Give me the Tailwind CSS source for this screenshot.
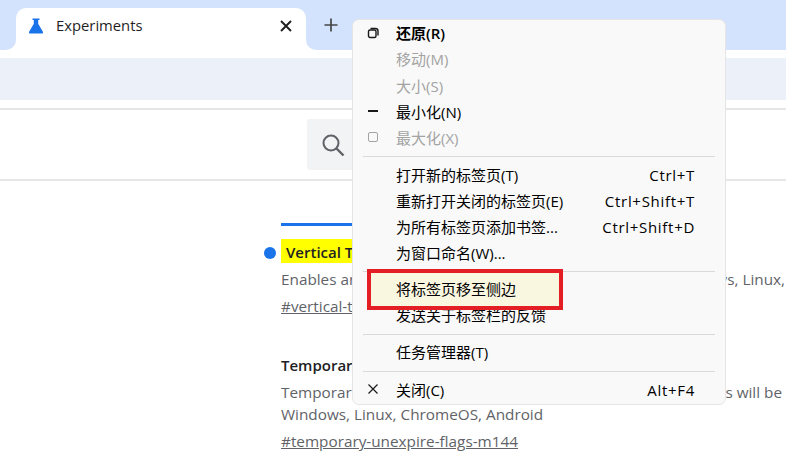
<!DOCTYPE html>
<html lang="zh-CN">
<head>
  <meta charset="UTF-8" />
  <meta name="viewport" content="width=device-width, initial-scale=1.0" />
  <title>Experiments</title>
  <script src="https://cdn.jsdelivr.net/npm/@tailwindcss/browser@4"></script>
</head>
<body class="bg-white">
<div class="relative w-[786px] h-[452px] overflow-hidden bg-white font-['Open_Sans','Noto_Sans_CJK_SC',sans-serif]">

  <!-- tab strip -->
  <div class="h-[50px] bg-[#d3e3fd] flex items-end pl-[16px]">
    <div class="relative w-[290px] h-[42px] bg-white rounded-t-[10px] flex items-center pl-[11px] pr-[14px]">
      <div class="absolute left-[-10px] bottom-0 w-[10px] h-[10px] bg-white"><div class="w-full h-full bg-[#d3e3fd] rounded-br-[10px]"></div></div>
      <div class="absolute right-[-10px] bottom-0 w-[10px] h-[10px] bg-white"><div class="w-full h-full bg-[#d3e3fd] rounded-bl-[10px]"></div></div>
      <svg class="w-[18px] h-[18px] shrink-0 mb-[7px]" viewBox="0 0 18 18"><path d="M5.500 1.500h7v1.600h-1.300v3.600l4.700 8c.5.9-.1 1.800-1 1.800H3.100c-.9 0-1.500-.9-1-1.800l4.700-8V3.100H5.500z" fill="#1a73e8"/></svg>
      <span class="ml-[11px] text-[14.800px] leading-none text-[#1f1f1f] mb-[8px]">Experiments</span>
      <svg class="ml-auto w-[12px] h-[12px] mb-[7px]" viewBox="0 0 12 12"><path d="M1 1l10 10M11 1L1 11" stroke="#1f1f1f" stroke-width="1.900"/></svg>
    </div>
    <svg class="ml-[18px] mb-[18px] w-[14px] h-[14px]" viewBox="0 0 14 14"><path d="M7 .5v13M.5 7h13" stroke="#444746" stroke-width="1.700"/></svg>
  </div>

  <!-- toolbar -->
  <div class="mt-[8px] h-[42px] bg-[#ebf0f9]"></div>

  <!-- flags header -->
  <div class="mt-[8px] h-[73px] border-t-2 border-b-2 border-[#e6e6e6] pl-[307px] pt-[9px]">
    <div class="h-[51px] w-[400px] bg-[#f1f3f4] rounded-[3px] flex items-center pl-[14px]">
      <svg class="w-[24px] h-[24px]" viewBox="0 0 24 24"><circle cx="10" cy="10" r="7.500" fill="none" stroke="#5f6368" stroke-width="2"/><path d="M15.500 15.500l7 7" stroke="#5f6368" stroke-width="2.400"/></svg>
    </div>
  </div>

  <!-- experiments list -->
  <div class="pl-[281px] pt-[42px] w-[800px]">
    <div class="h-[3px] w-[100px] bg-[#1a73e8]"></div>
    <div class="relative mt-[13px] h-[24px]">
      <span class="absolute left-[-17px] top-[8px] w-[12px] h-[12px] rounded-full bg-[#1a73e8]"></span>
      <span class="inline-block h-[24px] w-[100px] bg-[#ffff00] pl-[5px] text-[15px] leading-[26px] font-semibold text-[#202124] whitespace-nowrap overflow-hidden">Vertical Tabs</span>
    </div>
    <div class="mt-[4px] flex justify-between w-[504px] text-[15.300px] leading-[24px] text-[#5f6368]"><span>Enables an</span><span>ws, Linux,</span></div>
    <div class="mt-[3px] text-[15.300px] leading-[24px] text-[#5f6368] underline">#vertical-tabs</div>
    <div class="mt-[35px] text-[15px] leading-[24px] font-semibold text-[#202124]">Temporary</div>
    <div class="mt-[3px] flex justify-between w-[501px] text-[15.300px] leading-[24px] text-[#5f6368]"><span>Temporari</span><span>s will be</span></div>
    <div class="mt-[-2px] text-[15.300px] leading-[24px] text-[#5f6368]">Windows, Linux, ChromeOS, Android</div>
    <div class="mt-[3px] text-[15.300px] leading-[24px] text-[#5f6368] underline">#temporary-unexpire-flags-m144</div>
  </div>

  <!-- system menu -->
  <div class="absolute left-[352px] top-[19px] w-[374px] h-[386px] bg-[#f9f9f9] border border-[#e5e5e5] rounded-[7px] px-[10px] text-[15px] text-[#000]">
    <div class="h-[26px] flex items-center font-semibold">
      <svg class="w-[12px] h-[12px] ml-[4px] mb-[1px]" viewBox="0 0 12 12" fill="none" stroke="#1a1a1a" stroke-width="1.400"><rect x="1.500" y="3" width="7.500" height="7.500" rx="1.500"/><path d="M3.500 1.500h5a2.500 2.500 0 0 1 2.500 2.500v4.500"/></svg>
      <span class="ml-[17px]">还原(R)</span>
    </div>
    <div class="h-[27px] flex items-center text-[#a3a3a3] pl-[33px]">移动(M)</div>
    <div class="h-[26px] flex items-center text-[#a3a3a3] pl-[33px]">大小(S)</div>
    <div class="h-[26px] flex items-center">
      <span class="w-[10px] h-[2px] bg-[#1a1a1a] ml-[5px] mb-[3px]"></span>
      <span class="ml-[18px]">最小化(N)</span>
    </div>
    <div class="h-[26px] flex items-center text-[#a3a3a3]">
      <span class="w-[10px] h-[10px] border-[1.500px] border-[#a3a3a3] rounded-[2px] ml-[5px] mb-[2px]"></span>
      <span class="ml-[18px]">最大化(X)</span>
    </div>
    <div class="mt-[5px] mb-[5px] h-px bg-[#d9d9d9]"></div>
    <div class="h-[26px] flex items-center justify-between pl-[33px] pr-[20px]"><span>打开新的标签页(T)</span><span class="tracking-[0.7px]">Ctrl+T</span></div>
    <div class="h-[26px] flex items-center justify-between pl-[33px] pr-[20px]"><span>重新打开关闭的标签页(E)</span><span class="tracking-[0.7px]">Ctrl+Shift+T</span></div>
    <div class="h-[26px] flex items-center justify-between pl-[33px] pr-[20px]"><span>为所有标签页添加书签...</span><span class="tracking-[0.7px]">Ctrl+Shift+D</span></div>
    <div class="h-[26px] flex items-center pl-[33px]">为窗口命名(W)...</div>
    <div class="mt-[5px] mb-[4px] h-px bg-[#d9d9d9]"></div>
    <div class="h-[26px] flex items-center pl-[33px]">将标签页移至侧边</div>
    <div class="h-[26px] flex items-center pl-[33px]">发送关于标签栏的反馈</div>
    <div class="mt-[6px] mb-[4px] h-px bg-[#d9d9d9]"></div>
    <div class="h-[26px] flex items-center pl-[33px]">任务管理器(T)</div>
    <div class="mt-[6px] mb-[5px] h-px bg-[#d9d9d9]"></div>
    <div class="h-[26px] flex items-center justify-between pr-[20px]">
      <span class="flex items-center">
        <svg class="w-[12px] h-[12px] ml-[4px] mb-[3px]" viewBox="0 0 12 12"><path d="M1.500 1.500l9 9M10.500 1.500l-9 9" stroke="#1a1a1a" stroke-width="1.200"/></svg>
        <span class="ml-[17px]">关闭(C)</span>
      </span>
      <span class="tracking-[0.7px]">Alt+F4</span>
    </div>
  </div>

  <!-- red highlight box -->
  <div class="absolute left-[367px] top-[269px] w-[196px] h-[41px] border-[4px] border-[#e31e24] bg-[#faf7e0] text-[15px] text-[#000] pl-[25px] leading-[33px]">将标签页移至侧边</div>
</div>
</body>
</html>
